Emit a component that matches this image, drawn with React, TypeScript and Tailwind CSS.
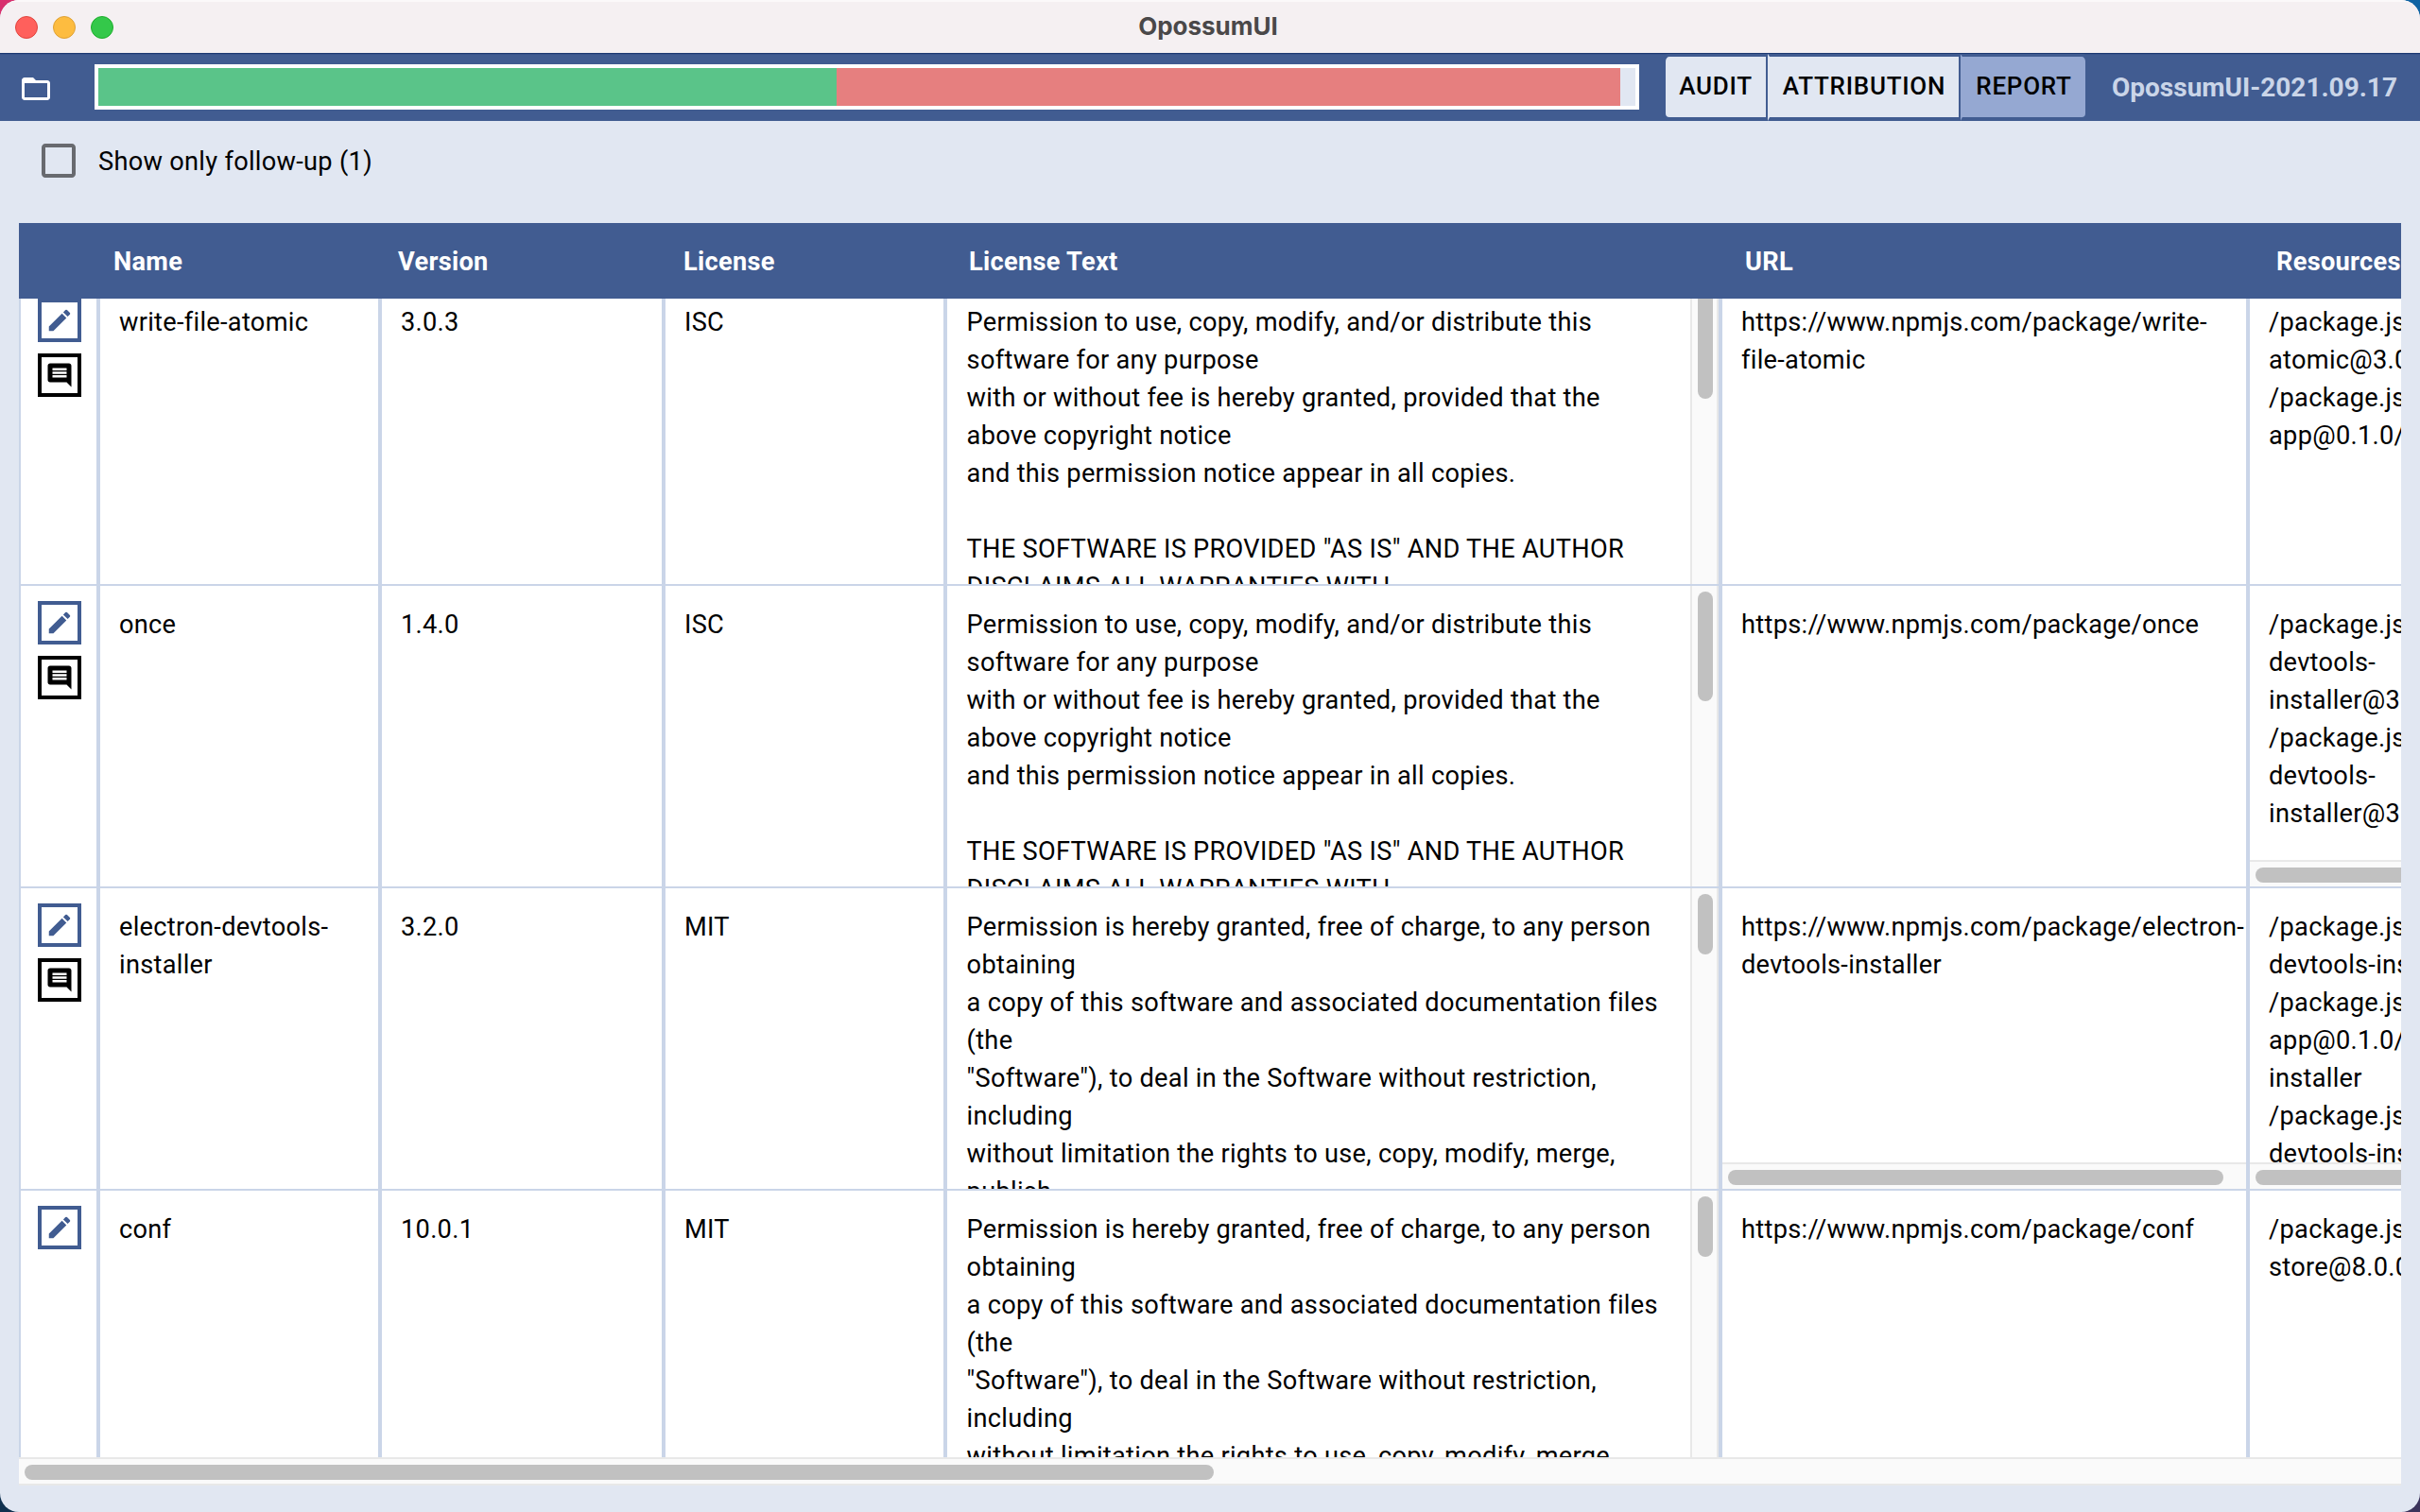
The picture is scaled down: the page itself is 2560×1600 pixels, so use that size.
const ISC = `Permission to use, copy, modify, and/or distribute this
software for any purpose
with or without fee is hereby granted, provided that the
above copyright notice
and this permission notice appear in all copies.

THE SOFTWARE IS PROVIDED "AS IS" AND THE AUTHOR
DISCLAIMS ALL WARRANTIES WITH`;

const MIT = `Permission is hereby granted, free of charge, to any person
obtaining
a copy of this software and associated documentation files
(the
"Software"), to deal in the Software without restriction,
including
without limitation the rights to use, copy, modify, merge,
publish,`;

type Row = {
  name: string;
  version: string;
  license: string;
  text: string;
  thumb: number;
  url: string;
  urlScroll?: boolean;
  resources: string;
  resourcesScroll?: boolean;
  comment: boolean;
};

const ROWS: Row[] = [
  {
    name: 'write-file-atomic',
    version: '3.0.3',
    license: 'ISC',
    text: ISC,
    thumb: 116,
    url: 'https://www.npmjs.com/package/write-\nfile-atomic',
    resources: '/package.json/write-file-\natomic@3.0.3\n/package.json/react-\napp@0.1.0/write-file-atomic',
    comment: true,
  },
  {
    name: 'once',
    version: '1.4.0',
    license: 'ISC',
    text: ISC,
    thumb: 116,
    url: 'https://www.npmjs.com/package/once',
    resources:
      '/package.json/electron-\ndevtools-\ninstaller@3.2.0/once\n/package.json/electron-\ndevtools-\ninstaller@3.2.0/once',
    resourcesScroll: true,
    comment: true,
  },
  {
    name: 'electron-devtools-\ninstaller',
    version: '3.2.0',
    license: 'MIT',
    text: MIT,
    thumb: 64,
    url: 'https://www.npmjs.com/package/electron-\ndevtools-installer',
    urlScroll: true,
    resources:
      '/package.json/electron-\ndevtools-installer@3.2.0\n/package.json/react-\napp@0.1.0/electron-devtools-\ninstaller\n/package.json/electron-\ndevtools-installer@3.2.0',
    resourcesScroll: true,
    comment: true,
  },
  {
    name: 'conf',
    version: '10.0.1',
    license: 'MIT',
    text: MIT,
    thumb: 64,
    url: 'https://www.npmjs.com/package/conf',
    resources: '/package.json/electron-\nstore@8.0.0/conf',
    comment: false,
  },
];

const COLUMNS = 'grid grid-cols-[84px_298px_300px_298px_820px_558px_600px]';

function PencilIcon() {
  return (
    <svg viewBox="0 0 24 24" className="size-[30px] fill-current">
      <path d="M3 17.25V21h3.75L17.81 9.94l-3.75-3.75L3 17.25zM20.71 7.04c.39-.39.39-1.02 0-1.41l-2.34-2.34a.9959.9959 0 0 0-1.41 0l-1.83 1.83 3.75 3.75 1.83-1.83z" />
    </svg>
  );
}

function CommentIcon() {
  return (
    <svg viewBox="0 0 24 24" className="size-[30px] fill-current">
      <path d="M21.99 4c0-1.1-.89-2-1.99-2H4c-1.1 0-2 .9-2 2v12c0 1.1.9 2 2 2h14l4 4-.01-18zM18 14H6v-2h12v2zm0-3H6V9h12v2zm0-3H6V6h12v2z" />
    </svg>
  );
}

function HorizontalScrollbar({ thumb }: { thumb: string }) {
  return (
    <div className="h-7 shrink-0 border-t-2 border-[#e8e8e8] bg-[#fafafa] pt-1.5 pl-1.5">
      <div className={`h-4 rounded-full bg-[#c1c1c1] ${thumb}`} />
    </div>
  );
}

function Cell({ text, thumb }: { text: string; thumb?: string }) {
  return (
    <div className="flex min-w-0 flex-col overflow-hidden border-x-2 border-b-2 border-[#cad5e8]">
      <div className="min-h-0 flex-1 overflow-hidden pt-[21px] pl-5 whitespace-pre">{text}</div>
      {thumb && <HorizontalScrollbar thumb={thumb} />}
    </div>
  );
}

function LicenseTextCell({ text, thumb }: { text: string; thumb: number }) {
  return (
    <div className="flex min-w-0 overflow-hidden border-x-2 border-b-2 border-[#cad5e8]">
      <div className="min-w-0 flex-1 overflow-hidden pt-[21px] pl-[20.6px] whitespace-pre">{text}</div>
      <div className="w-[30px] shrink-0 border-x-2 border-[#e8e8e8] bg-[#fafafa] pt-1.5 pl-1.5">
        <div className="w-4 rounded-full bg-[#c1c1c1]" style={{ height: thumb }} />
      </div>
    </div>
  );
}

function TableRow({ row }: { row: Row }) {
  return (
    <div className={`${COLUMNS} h-80 shrink-0 bg-white`}>
      <div className="flex flex-col gap-3 border-x-2 border-b-2 border-[#cad5e8] pt-4 pl-[18px]">
        <button className="flex size-[46px] items-center justify-center border-4 border-[#415c91] text-[#415c91]">
          <PencilIcon />
        </button>
        {row.comment && (
          <button className="flex size-[46px] items-center justify-center border-4 border-black text-black">
            <CommentIcon />
          </button>
        )}
      </div>
      <Cell text={row.name} />
      <Cell text={row.version} />
      <Cell text={row.license} />
      <LicenseTextCell text={row.text} thumb={row.thumb} />
      <Cell text={row.url} thumb={row.urlScroll ? 'w-[524px]' : undefined} />
      <Cell text={row.resources} thumb={row.resourcesScroll ? 'w-[524px]' : undefined} />
    </div>
  );
}

function TitleBar() {
  return (
    <div className="flex h-14 items-center border-t-2 border-[#fbf9fa] bg-[#f5f0f2]">
      <div className="flex flex-1 gap-4 pl-4">
        <div className="size-6 rounded-full border border-[#e0443e] bg-[#ff605c]" />
        <div className="size-6 rounded-full border border-[#dea034] bg-[#fdbc40]" />
        <div className="size-6 rounded-full border border-[#1dad2b] bg-[#34c84a]" />
      </div>
      <div className="pb-0.5 font-[Inter,sans-serif] text-[26px] leading-none font-bold tracking-[0px] text-[#4a4849]">
        OpossumUI
      </div>
      <div className="flex-1 pr-5" />
    </div>
  );
}

function TopBar() {
  return (
    <div className="flex h-[72px] items-center bg-[linear-gradient(#1d3a72_1px,#38538a_1px,#38538a_2px,#415c91_2px)]">
      <svg viewBox="0 0 24 24" className="mt-1 ml-5 size-9 shrink-0 fill-white">
        <path d="M20 6h-8l-2-2H4c-1.1 0-1.99.9-1.99 2L2 18c0 1.1.9 2 2 2h16c1.1 0 2-.9 2-2V8c0-1.1-.9-2-2-2zm0 12H4V8h16v10z" />
      </svg>
      <div className="ml-11 flex h-12 w-[1634px] shrink-0 border-4 border-white bg-[#e1e7f2]">
        <div className="w-[781px] bg-[#5ac489]" />
        <div className="w-[829px] bg-[#e67f7f]" />
      </div>
      <div className="mt-px ml-6 flex h-[71px] shrink-0 text-[26px] font-medium tracking-[0.74px] text-black">
        <button className="w-28 rounded-l-lg border-t-3 border-r-2 border-b-4 border-l-4 border-[#415c91] bg-[#e1e7f2] pb-0.5">
          AUDIT
        </button>
        <button className="w-[204px] border-t-3 border-r-2 border-b-4 border-l-2 border-[#415c91] border-l-transparent bg-[#e1e7f2] pb-0.5">
          ATTRIBUTION
        </button>
        <button className="w-[136px] rounded-r-lg border-t-3 border-r-4 border-b-4 border-l-2 border-[#415c91] border-l-transparent bg-[#95a8d2] pb-0.5">
          REPORT
        </button>
      </div>
      <div className="mt-0.5 ml-6 text-[28px] font-bold tracking-[0px] whitespace-nowrap text-[#cad5e8]">
        OpossumUI-2021.09.17
      </div>
    </div>
  );
}

export default function App() {
  return (
    <div className="h-[1600px] w-[2560px] overflow-hidden bg-[conic-gradient(#0f63a3_0_25%,#3b345c_25%_50%,#10314f_50%_75%,#d8306e_75%)] font-[Roboto,sans-serif] text-[27.2px] leading-[40px] tracking-[0.29px] text-black">
      <div className="flex h-full flex-col overflow-hidden rounded-[20px] bg-[#e1e7f2]">
        <TitleBar />
        <TopBar />
        <label className="flex h-[108px] items-start gap-[18px] pt-[18px] pl-[38px]">
          <svg viewBox="0 0 24 24" className="size-12 fill-[#686a6f]">
            <path d="M19 5v14H5V5h14m0-2H5c-1.1 0-2 .9-2 2v14c0 1.1.9 2 2 2h14c1.1 0 2-.9 2-2V5c0-1.1-.9-2-2-2z" />
          </svg>
          <span className="pt-[5px]">Show only follow-up (1)</span>
        </label>
        <div className="mx-5 flex h-[1336px] flex-col overflow-hidden">
          <div className={`${COLUMNS} h-20 shrink-0 items-center bg-[#415c91] pt-0.5 font-bold text-white`}>
            <span />
            <span className="pl-4">Name</span>
            <span className="pl-[19px]">Version</span>
            <span className="pl-[21px]">License</span>
            <span className="pl-[25px]">License Text</span>
            <span className="pl-[26px]">URL</span>
            <span className="pl-[30px]">Resources</span>
          </div>
          <div className="flex h-[1226px] shrink-0 flex-col justify-start overflow-hidden">
            <div className="-mt-4 flex flex-col">
              {ROWS.map((row) => (
                <TableRow key={row.name} row={row} />
              ))}
            </div>
          </div>
          <div className="h-[30px] shrink-0 border-y-2 border-[#e8e8e8] bg-[#fafafa] pt-1.5 pl-1.5">
            <div className="h-4 w-[1258px] rounded-full bg-[#c1c1c1]" />
          </div>
        </div>
      </div>
    </div>
  );
}
